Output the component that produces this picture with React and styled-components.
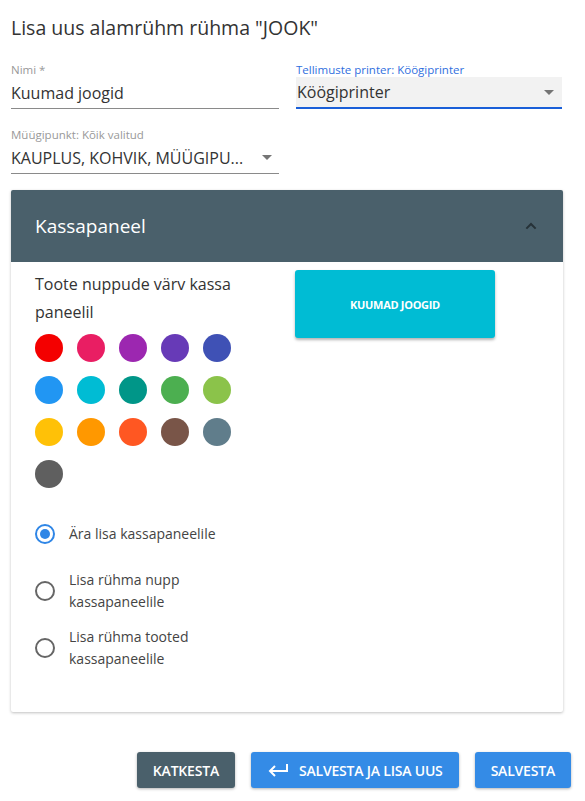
import React from "react";
import styled, { createGlobalStyle } from "styled-components";

const Global = createGlobalStyle`
  html, body { margin: 0; padding: 0; background: #fff; }
  body { font-family: "Open Sans", "Noto Sans", sans-serif; color: #333; }
  * { box-sizing: border-box; }
`;

const Page = styled.div`
  width: 585px;
  padding: 15px 14px 12px 11px;
`;

const Title = styled.h1`
  margin: 0;
  font-size: 19.5px;
  font-weight: 400;
  color: #333;
  line-height: 26px;
`;

const FieldGrid = styled.div`
  display: grid;
  grid-template-columns: 268px 266px;
  column-gap: 17px;
  row-gap: 19px;
  margin-top: 22px;
  width: 552px;
`;

const Field = styled.div`
  display: flex;
  flex-direction: column;
`;

const Label = styled.div`
  font-size: 11.5px;
  line-height: 14px;
  color: ${(p) => (p.$active ? "#2f6fde" : "#999")};
`;

const Control = styled.div`
  display: flex;
  align-items: center;
  justify-content: space-between;
  height: 32px;
  padding: ${(p) => (p.$filled ? "0 8px 0 1px" : "0 6px 0 0")};
  background: ${(p) => (p.$filled ? "#f2f2f2" : "transparent")};
  border-bottom: ${(p) => (p.$active ? "2px solid #1a5fd8" : "1px solid #8a8a8a")};
  font-size: 16px;
  color: #333;
`;

const Value = styled.span`
  white-space: nowrap;
`;

const Caret = styled.span`
  width: 0;
  height: 0;
  border-left: 5px solid transparent;
  border-right: 5px solid transparent;
  border-top: 5px solid #757575;
  margin-right: ${(p) => p.$mr || 0}px;
`;

const Card = styled.section`
  margin-top: 16px;
  width: 552px;
  background: #fff;
  box-shadow: 0 1px 3px rgba(0, 0, 0, 0.25);
  border-radius: 2px;
  overflow: hidden;
`;

const CardHeader = styled.div`
  height: 72px;
  background: #4a606b;
  display: flex;
  align-items: center;
  justify-content: space-between;
  padding: 0 24px 0 24px;
`;

const CardTitle = styled.h2`
  margin: 0;
  font-size: 19px;
  font-weight: 400;
  color: #fff;
`;

const CardBody = styled.div`
  padding: 8px 24px 36px 24px;
`;

const TopRow = styled.div`
  display: flex;
  align-items: flex-start;
`;

const LeftCol = styled.div`
  width: 260px;
`;

const ColorText = styled.p`
  margin: 0;
  font-size: 16px;
  line-height: 28px;
  color: #333;
  width: 240px;
`;

const Swatches = styled.div`
  display: grid;
  grid-template-columns: repeat(5, 28px);
  gap: 14px;
  margin-top: 8px;
`;

const Swatch = styled.div`
  width: 28px;
  height: 28px;
  border-radius: 50%;
  background: ${(p) => p.$c};
`;

const Preview = styled.div`
  width: 200px;
  height: 68px;
  background: #00bcd4;
  border-radius: 3px;
  box-shadow: 0 2px 3px rgba(0, 0, 0, 0.3);
  display: flex;
  align-items: center;
  justify-content: center;
  color: #fff;
  font-size: 11px;
  font-weight: 700;
  letter-spacing: -0.3px;
`;

const Radios = styled.div`
  margin-top: 17px;
  display: flex;
  flex-direction: column;
`;

const RadioRow = styled.label`
  display: flex;
  align-items: center;
  min-height: 57px;
  gap: 14px;
`;

const RadioDot = styled.span`
  flex: none;
  width: 20px;
  height: 20px;
  border-radius: 50%;
  border: 2px solid ${(p) => (p.$on ? "#2f86e6" : "#666")};
  display: flex;
  align-items: center;
  justify-content: center;
  &::after {
    content: "";
    display: ${(p) => (p.$on ? "block" : "none")};
    width: 10px;
    height: 10px;
    border-radius: 50%;
    background: #2f86e6;
  }
`;

const RadioText = styled.span`
  font-size: 14px;
  line-height: 22px;
  color: #444;
  width: 160px;
`;

const Actions = styled.div`
  display: flex;
  justify-content: flex-end;
  gap: 16px;
  margin-top: 40px;
`;

const Button = styled.button`
  height: 36px;
  border: none;
  border-radius: 3px;
  padding: 0 16px;
  background: ${(p) => (p.$dark ? "#4a606b" : "#348be6")};
  color: #fff;
  font-family: "Open Sans", "Noto Sans", sans-serif;
  font-size: 14px;
  font-weight: 600;
  display: flex;
  align-items: center;
  gap: 10px;
  box-shadow: 0 1px 3px rgba(0, 0, 0, 0.3);
  letter-spacing: -0.2px;
`;

const colors = [
  "#f40000", "#e91e63", "#9c27b0", "#673ab7", "#3f51b5",
  "#2196f3", "#00bcd4", "#009688", "#4caf50", "#8bc34a",
  "#ffc107", "#ff9800", "#ff5722", "#795548", "#607d8b",
  "#5f5f5f",
];

export default function App() {
  return (
    <>
      <Global />
      <Page>
        <Title>Lisa uus alamrühm rühma "JOOK"</Title>
        <FieldGrid>
          <Field>
            <Label>Nimi *</Label>
            <Control>
              <Value>Kuumad joogid</Value>
            </Control>
          </Field>
          <Field>
            <Label $active>Tellimuste printer: Köögiprinter</Label>
            <Control $filled $active>
              <Value>Köögiprinter</Value>
              <Caret />
            </Control>
          </Field>
          <Field>
            <Label>Müügipunkt: Kõik valitud</Label>
            <Control>
              <Value>KAUPLUS, KOHVIK, MÜÜGIPU...</Value>
              <Caret $mr={1} />
            </Control>
          </Field>
        </FieldGrid>
        <Card>
          <CardHeader>
            <CardTitle>Kassapaneel</CardTitle>
            <svg width="16" height="16" viewBox="0 0 24 24">
              <path d="M5 16 L12 9 L19 16" fill="none" stroke="#263238" strokeWidth="3" />
            </svg>
          </CardHeader>
          <CardBody>
            <TopRow>
              <LeftCol>
                <ColorText>Toote nuppude värv kassa paneelil</ColorText>
                <Swatches>
                  {colors.map((c) => (
                    <Swatch key={c} $c={c} />
                  ))}
                </Swatches>
              </LeftCol>
              <Preview>KUUMAD JOOGID</Preview>
            </TopRow>
            <Radios>
              <RadioRow>
                <RadioDot $on />
                <RadioText>Ära lisa kassapaneelile</RadioText>
              </RadioRow>
              <RadioRow>
                <RadioDot />
                <RadioText>Lisa rühma nupp kassapaneelile</RadioText>
              </RadioRow>
              <RadioRow>
                <RadioDot />
                <RadioText>Lisa rühma tooted kassapaneelile</RadioText>
              </RadioRow>
            </Radios>
          </CardBody>
        </Card>
        <Actions>
          <Button $dark>KATKESTA</Button>
          <Button>
            <svg width="22" height="14" viewBox="0 0 22 14">
              <path d="M20 1 V8 H3 M8 3 L3 8 L8 13" fill="none" stroke="#fff" strokeWidth="2" />
            </svg>
            SALVESTA JA LISA UUS
          </Button>
          <Button>SALVESTA</Button>
        </Actions>
      </Page>
    </>
  );
}
